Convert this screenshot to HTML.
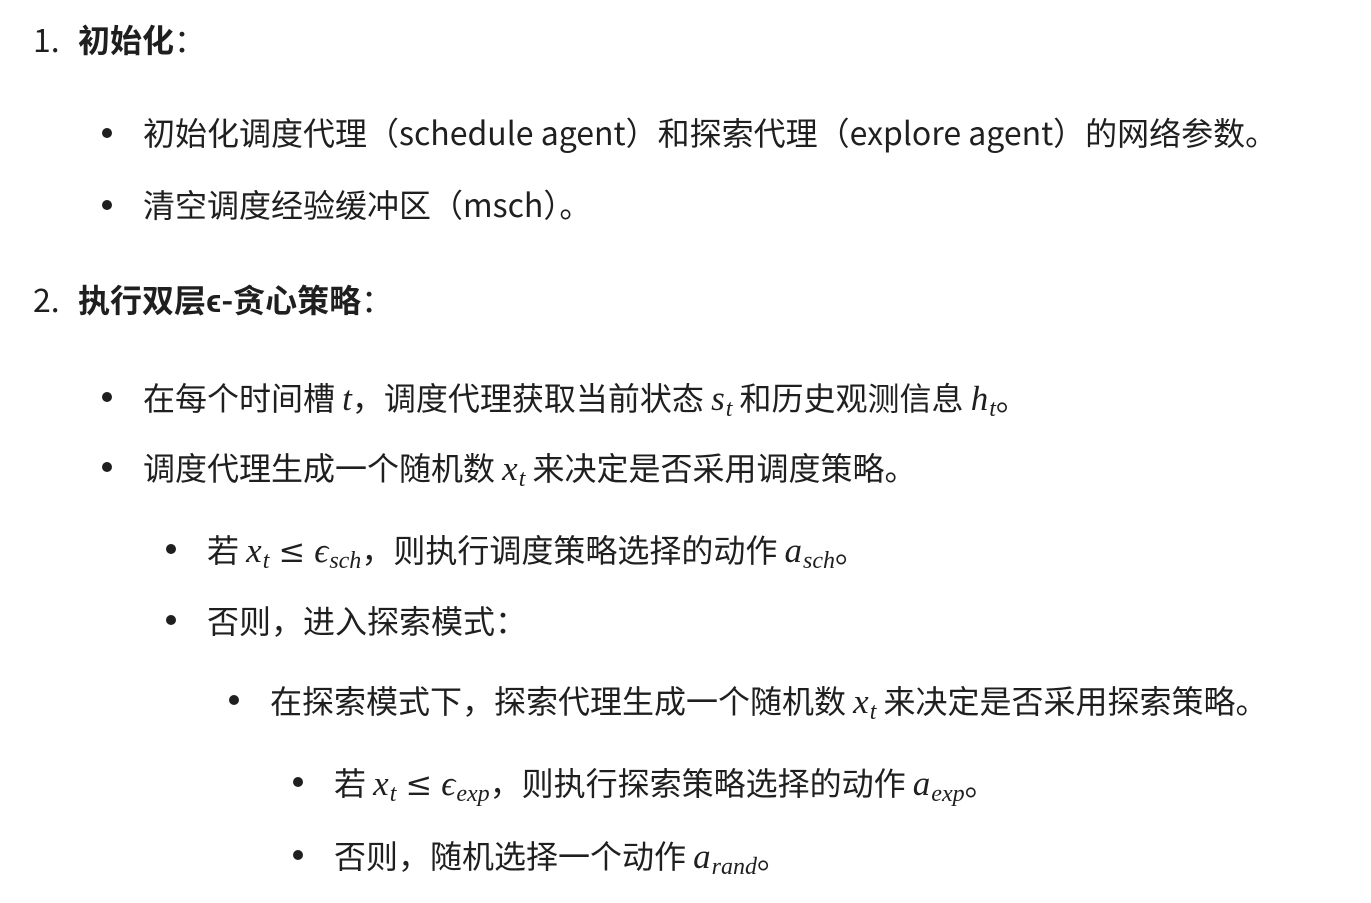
<!DOCTYPE html>
<html><head><meta charset="utf-8"><style>
html,body{margin:0;padding:0;background:#fff;}
body{width:1371px;height:903px;position:relative;overflow:hidden;color:#1f1f1f;
font-family:"Noto Sans CJK SC","Liberation Sans",sans-serif;font-size:32px;}
.l{position:absolute;height:40px;line-height:40px;white-space:nowrap;}
.d{position:absolute;width:10px;height:10px;border-radius:50%;background:#1f1f1f;}
b{font-weight:bold;}
.m{font-family:"Liberation Serif","DejaVu Serif",serif;font-style:italic;font-size:35px;}
.m sub{font-size:24px;vertical-align:-6px;line-height:0;margin-left:1px;}
.r{font-family:"DejaVu Serif",serif;font-style:normal;font-size:32px;margin:0 9px;}
</style></head><body>
<div class="l" style="left:33px;top:19px">1.</div><div class="l" style="left:78px;top:19px"><b>初始化</b>：</div>

<div class="d" style="left:102px;top:128px"></div>
<div class="l" style="left:143px;top:112px">初始化调度代理（schedule agent）和探索代理（explore agent）的网络参数。</div>
<div class="d" style="left:102px;top:200px"></div>
<div class="l" style="left:143px;top:184px">清空调度经验缓冲区（msch）。</div>

<div class="l" style="left:33px;top:279px">2.</div><div class="l" style="left:78px;top:279px"><b>执行双层ϵ-贪心策略</b>：</div>

<div class="d" style="left:102px;top:392px"></div>
<div class="l" style="left:143px;top:377px">在每个时间槽 <span class="m">t</span>，调度代理获取当前状态 <span class="m">s<sub>t</sub></span> 和历史观测信息 <span class="m">h<sub>t</sub></span>。</div>
<div class="d" style="left:102px;top:462px"></div>
<div class="l" style="left:143px;top:447px">调度代理生成一个随机数 <span class="m">x<sub>t</sub></span> 来决定是否采用调度策略。</div>

<div class="d" style="left:166px;top:544px"></div>
<div class="l" style="left:207px;top:529px">若 <span class="m">x<sub>t</sub></span><span class="r">≤</span><span class="m">ϵ<sub>sch</sub></span>，则执行调度策略选择的动作 <span class="m">a<sub>sch</sub></span>。</div>
<div class="d" style="left:166px;top:615px"></div>
<div class="l" style="left:207px;top:600px">否则，进入探索模式：</div>

<div class="d" style="left:229px;top:695px"></div>
<div class="l" style="left:270px;top:680px">在探索模式下，探索代理生成一个随机数 <span class="m">x<sub>t</sub></span> 来决定是否采用探索策略。</div>

<div class="d" style="left:293px;top:777px"></div>
<div class="l" style="left:334px;top:762px">若 <span class="m">x<sub>t</sub></span><span class="r">≤</span><span class="m">ϵ<sub>exp</sub></span>，则执行探索策略选择的动作 <span class="m">a<sub>exp</sub></span>。</div>
<div class="d" style="left:293px;top:850px"></div>
<div class="l" style="left:334px;top:835px">否则，随机选择一个动作 <span class="m">a<sub>rand</sub></span>。</div>
</body></html>
